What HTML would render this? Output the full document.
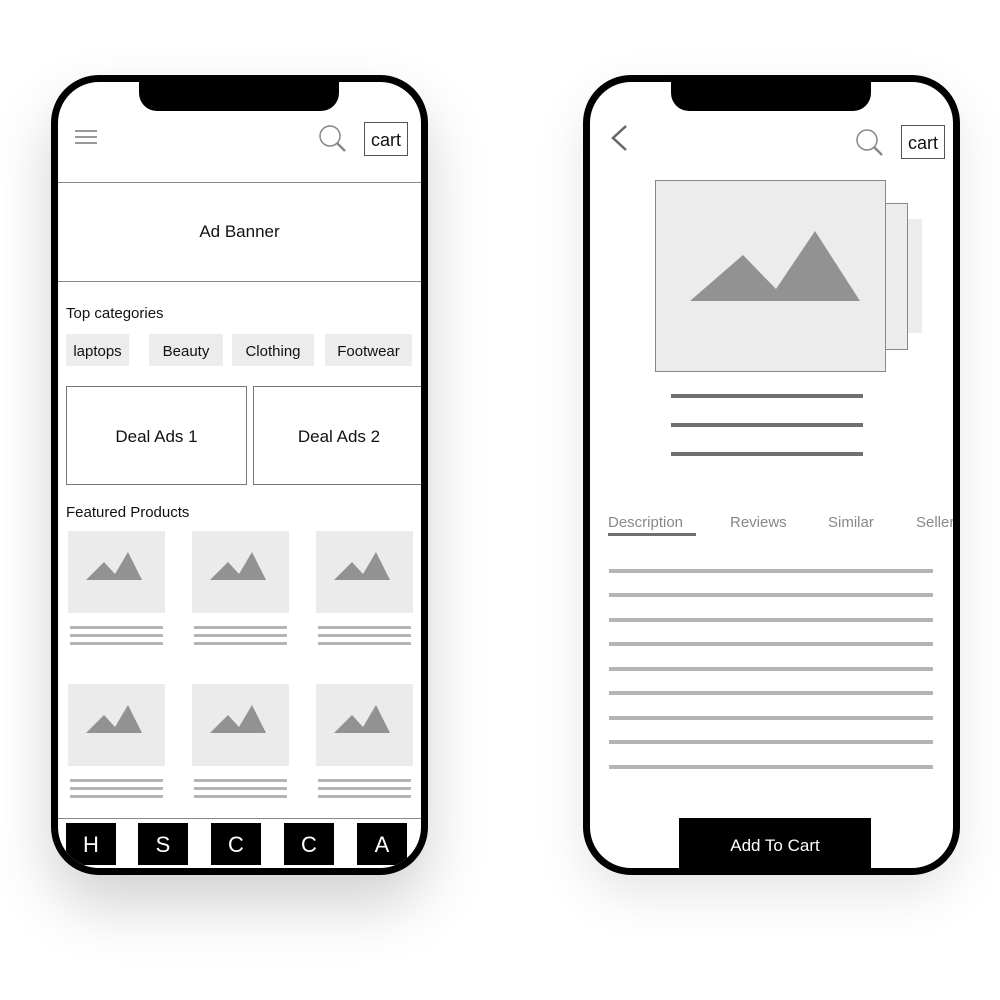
<!DOCTYPE html>
<html><head><style>
body{margin:0;width:1000px;height:1000px;background:#fff;position:relative;overflow:hidden;font-family:"Liberation Sans",sans-serif;}
.ph{position:absolute;top:75px;width:363px;height:786px;border:7px solid #000;border-radius:48px;background:#fff;overflow:hidden;}
.ph *{position:absolute;box-sizing:border-box;}
.notch{left:81px;top:0;width:200px;height:29px;background:#000;border-radius:0 0 18px 18px;}
.t{white-space:nowrap;color:#111;}
.chip{background:#ececec;height:32px;top:252px;font-size:15px;line-height:35px;text-align:center;color:#111;}
.img{background:#ebebeb;width:97px;height:82px;}
.ln{height:3px;background:#b4b4b4;}
.nb{background:#000;color:#fff;width:50px;height:42px;top:741px;font-size:22px;line-height:44px;text-align:center;}
.dl{left:19px;width:324px;height:4px;background:#b4b4b4;}
.shadow{position:absolute;border-radius:50px;}
</style></head><body>
<div class="shadow" style="left:51px;top:75px;width:377px;height:800px;box-shadow:0 30px 60px rgba(0,0,0,0.18);"></div>
<div class="shadow" style="left:583px;top:75px;width:377px;height:800px;box-shadow:0 20px 50px rgba(0,0,0,0.10);"></div>

<div class="ph" style="left:51px;">
  <div class="notch"></div>
  <div style="left:17px;top:48px;width:22px;height:2px;background:#999"></div>
  <div style="left:17px;top:54px;width:22px;height:2px;background:#999"></div>
  <div style="left:17px;top:60px;width:22px;height:2px;background:#999"></div>
  <svg style="left:260px;top:42px" width="30" height="30"><circle cx="12" cy="12" r="10" fill="none" stroke="#888" stroke-width="1.5"/><line x1="19" y1="19" x2="27" y2="27" stroke="#888" stroke-width="2.5"/></svg>
  <div class="t" style="left:306px;top:40px;width:44px;height:34px;border:1px solid #555;font-size:18px;line-height:34px;text-align:center;">cart</div>
  <div style="left:0;top:100px;width:363px;height:100px;border:1px solid #888;border-width:1px 0;"></div>
  <div class="t" style="left:0;top:140px;width:363px;text-align:center;font-size:17px;">Ad Banner</div>
  <div class="t" style="left:8px;top:223px;font-size:15px;">Top categories</div>
  <div class="chip" style="left:8px;width:63px;">laptops</div>
  <div class="chip" style="left:91px;width:74px;">Beauty</div>
  <div class="chip" style="left:174px;width:82px;">Clothing</div>
  <div class="chip" style="left:267px;width:87px;">Footwear</div>
  <div style="left:8px;top:304px;width:181px;height:99px;border:1px solid #777;"></div>
  <div style="left:195px;top:304px;width:175px;height:99px;border:1px solid #777;"></div>
  <div class="t" style="left:8px;top:345px;width:181px;text-align:center;font-size:17px;">Deal Ads 1</div>
  <div class="t" style="left:195px;top:345px;width:172px;text-align:center;font-size:17px;">Deal Ads 2</div>
  <div class="t" style="left:8px;top:422px;font-size:15px;">Featured Products</div>

  <div class="img" style="left:10px;top:449px"><svg width="97" height="82"><polygon points="18,49 36,31 47,43 60,21 74,49" fill="#929292"/></svg></div>
  <div class="img" style="left:134px;top:449px"><svg width="97" height="82"><polygon points="18,49 36,31 47,43 60,21 74,49" fill="#929292"/></svg></div>
  <div class="img" style="left:258px;top:449px"><svg width="97" height="82"><polygon points="18,49 36,31 47,43 60,21 74,49" fill="#929292"/></svg></div>
  <div class="img" style="left:10px;top:602px"><svg width="97" height="82"><polygon points="18,49 36,31 47,43 60,21 74,49" fill="#929292"/></svg></div>
  <div class="img" style="left:134px;top:602px"><svg width="97" height="82"><polygon points="18,49 36,31 47,43 60,21 74,49" fill="#929292"/></svg></div>
  <div class="img" style="left:258px;top:602px"><svg width="97" height="82"><polygon points="18,49 36,31 47,43 60,21 74,49" fill="#929292"/></svg></div>

  <div class="ln" style="left:12px;top:544px;width:93px"></div><div class="ln" style="left:12px;top:552px;width:93px"></div><div class="ln" style="left:12px;top:560px;width:93px"></div>
  <div class="ln" style="left:136px;top:544px;width:93px"></div><div class="ln" style="left:136px;top:552px;width:93px"></div><div class="ln" style="left:136px;top:560px;width:93px"></div>
  <div class="ln" style="left:260px;top:544px;width:93px"></div><div class="ln" style="left:260px;top:552px;width:93px"></div><div class="ln" style="left:260px;top:560px;width:93px"></div>
  <div class="ln" style="left:12px;top:697px;width:93px"></div><div class="ln" style="left:12px;top:705px;width:93px"></div><div class="ln" style="left:12px;top:713px;width:93px"></div>
  <div class="ln" style="left:136px;top:697px;width:93px"></div><div class="ln" style="left:136px;top:705px;width:93px"></div><div class="ln" style="left:136px;top:713px;width:93px"></div>
  <div class="ln" style="left:260px;top:697px;width:93px"></div><div class="ln" style="left:260px;top:705px;width:93px"></div><div class="ln" style="left:260px;top:713px;width:93px"></div>

  <div style="left:0;top:736px;width:363px;height:1px;background:#888"></div>
  <div class="nb" style="left:8px">H</div>
  <div class="nb" style="left:80px">S</div>
  <div class="nb" style="left:153px">C</div>
  <div class="nb" style="left:226px">C</div>
  <div class="nb" style="left:299px">A</div>
</div>

<div class="ph" style="left:583px;">
  <div class="notch"></div>
  <svg style="left:18px;top:41px" width="24" height="30"><polyline points="18,3 5,15 18,27" fill="none" stroke="#666" stroke-width="2.5"/></svg>
  <svg style="left:265px;top:46px" width="30" height="30"><circle cx="12" cy="12" r="10" fill="none" stroke="#888" stroke-width="1.5"/><line x1="19" y1="19" x2="27" y2="27" stroke="#888" stroke-width="2.5"/></svg>
  <div class="t" style="left:311px;top:43px;width:44px;height:34px;border:1px solid #555;font-size:18px;line-height:34px;text-align:center;">cart</div>
  <div style="left:317px;top:137px;width:15px;height:114px;background:#ececec"></div>
  <div style="left:294px;top:121px;width:24px;height:147px;background:#ececec;border:1px solid #888"></div>
  <div style="left:65px;top:98px;width:231px;height:192px;background:#ececec;border:1px solid #888"><svg style="position:absolute;left:0;top:0" width="231" height="192"><polygon points="34,120 87,74 120,108 159,50 204,120" fill="#929292"/></svg></div>
  <div style="left:81px;top:312px;width:192px;height:4px;background:#6f6f6f"></div>
  <div style="left:81px;top:341px;width:192px;height:4px;background:#6f6f6f"></div>
  <div style="left:81px;top:370px;width:192px;height:4px;background:#6f6f6f"></div>
  <div class="t" style="left:18px;top:432px;font-size:15px;color:#888">Description</div>
  <div class="t" style="left:140px;top:432px;font-size:15px;color:#888">Reviews</div>
  <div class="t" style="left:238px;top:432px;font-size:15px;color:#888">Similar</div>
  <div class="t" style="left:326px;top:432px;font-size:15px;color:#888">Sellers</div>
  <div style="left:18px;top:451px;width:88px;height:3px;background:#6f6f6f"></div>
  <div class="dl" style="top:487px"></div><div class="dl" style="top:511px"></div><div class="dl" style="top:536px"></div>
  <div class="dl" style="top:560px"></div><div class="dl" style="top:585px"></div><div class="dl" style="top:609px"></div>
  <div class="dl" style="top:634px"></div><div class="dl" style="top:658px"></div><div class="dl" style="top:683px"></div>
  <div style="left:89px;top:736px;width:192px;height:60px;background:#000;color:#fff;font-size:17px;text-align:center;line-height:55px;">Add To Cart</div>
</div>
</body></html>
